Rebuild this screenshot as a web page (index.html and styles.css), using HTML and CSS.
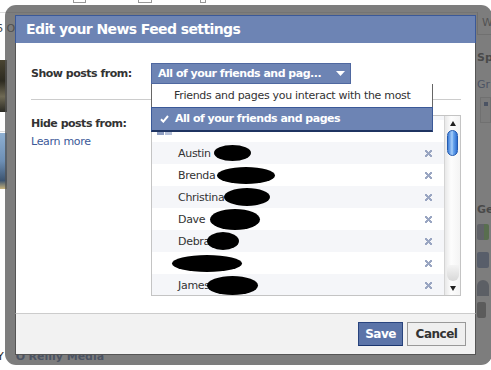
FILE: index.html
```html
<!DOCTYPE html>
<html>
<head>
<meta charset="utf-8">
<link rel="stylesheet" href="styles.css">
</head>
<body>
<div class="page">
  <div class="pmain">
    <div class="ptop"><span class="tb b1"></span><span class="tb b2"></span><span class="tb b3"></span></div>
    <div class="pcontent">
      <div class="pleft">
        <div class="lt">6 O</div>
        <div class="photo dark"></div>
        <div class="hline"></div>
        <div class="photo sky"></div>
      </div>
    </div>
    <div class="pbottom"><span class="yy">Y</span><span class="orm">O'Reilly Media</span></div>
  </div>
  <div class="pside">
    <div class="rbox">W</div>
    <div class="rh">Sp</div>
    <div class="rl">Gr</div>
    <div class="rpanel"><span class="rsq"></span></div>
    <div class="rh rge">Ge</div>
    <div class="ricon green"></div>
    <div class="ricon bubble"></div>
    <div class="ricon people"></div>
    <div class="ricon phone"></div>
  </div>
</div>

<div class="frame">
  <div class="dialog">
    <div class="dlg-title">Edit your News Feed settings</div>
    <div class="dlg-body">
      <div class="field field-show">
        <div class="label">Show posts from:</div>
        <div class="select">
          <div class="select-btn"><span>All of your friends and pag...</span>
            <svg class="tri" width="9" height="5" viewBox="0 0 9 5"><path d="M0 0H9L4.5 5Z" fill="#fff"/></svg>
          </div>
          <ul class="menu">
            <li>Friends and pages you interact with the most</li>
            <li class="sel"><svg class="check" width="9" height="8" viewBox="0 0 9 8"><path d="M1 4.2L3.3 6.6L8 1" fill="none" stroke="#fff" stroke-width="2"/></svg>All of your friends and pages</li>
          </ul>
        </div>
      </div>
      <div class="sep"></div>
      <div class="field field-hide">
        <div class="label">Hide posts from:<a class="learn">Learn more</a></div>
        <div class="listbox">
          <div class="list">
            <div class="rows">
              <div class="row"></div>
              <div class="row"><span class="pgicon"></span></div>
              <div class="row"><span class="name">Austin</span><span class="blob" style="width:37px;height:16px;margin-left:3px"></span><span class="x"></span></div>
              <div class="row"><span class="name">Brenda</span><span class="blob" style="width:58px;height:17px;margin-left:1px"></span><span class="x"></span></div>
              <div class="row"><span class="name">Christina</span><span class="blob" style="width:46px;height:18px;margin-left:0"></span><span class="x"></span></div>
              <div class="row"><span class="name">Dave</span><span class="blob" style="width:50px;height:21px;margin-left:5px"></span><span class="x"></span></div>
              <div class="row"><span class="name">Debra</span><span class="blob" style="width:32px;height:18px;margin-left:-3px"></span><span class="x"></span></div>
              <div class="row"><span class="blob" style="width:70px;height:17px;margin-left:-6px"></span><span class="x"></span></div>
              <div class="row"><span class="name">James</span><span class="blob" style="width:51px;height:19px;margin-left:-3px"></span><span class="x"></span></div>
            </div>
          </div>
          <div class="scrollbar">
            <div class="sb-up"><svg width="6" height="5" viewBox="0 0 6 5"><path d="M3 0L6 5H0Z" fill="#222"/></svg></div>
            <div class="sb-thumb"></div>
            <div class="sb-track"></div>
            <div class="sb-cap"></div>
            <div class="sb-down"><svg width="6" height="5" viewBox="0 0 6 5"><path d="M0 0H6L3 5Z" fill="#222"/></svg></div>
          </div>
        </div>
      </div>
    </div>
    <div class="dlg-footer">
      <button class="btn save">Save</button>
      <button class="btn cancel">Cancel</button>
    </div>
  </div>
</div>
</body>
</html>
```
FILE: styles.css
```css
html, body {
  margin: 0;
  padding: 0;
}
body {
  width: 491px;
  height: 370px;
  overflow: hidden;
  position: relative;
  background: #fff;
  font-family: "DejaVu Sans", sans-serif;
  font-size: 11px;
  color: #333;
}

/* background page */
.page {
  display: flex;
  height: 370px;
}
.pmain {
  flex: 1;
  display: flex;
  flex-direction: column;
}
.ptop {
  height: 12px;
  border-bottom: 1px solid #dcdcdc;
  display: flex;
  align-items: flex-start;
}
.tb {
  display: block;
  height: 2px;
  border: 1px solid #999;
  border-top: none;
}
.b1 { margin-left: 73px; width: 11px; }
.b2 { margin-left: 52px; width: 12px; }
.b3 { margin-left: 48px; width: 4px; }
.pcontent {
  flex: 1;
  display: flex;
}
.pleft {
  width: 8px;
  display: flex;
  flex-direction: column;
}
.lt {
  margin-top: 9px;
  margin-left: -4px;
  white-space: nowrap;
  color: #444;
  font-size: 11px;
}
.photo { width: 7px; }
.dark {
  margin-top: 25px;
  height: 52px;
  background: linear-gradient(#4a4532, #2c2a20 40%, #6f6a55 70%, #2a2a24);
}
.hline {
  margin-top: 19px;
  width: 5px;
  height: 1px;
  background: #ddd;
}
.sky {
  margin-top: 1px;
  height: 56px;
  background: linear-gradient(#8fb0d2, #6d8fb5 50%, #3c5470 85%, #c9b37a);
}
.pbottom {
  height: 20px;
  display: flex;
  align-items: flex-start;
  font-size: 11px;
  white-space: nowrap;
}
.yy { color: #222; margin-left: -3px; }
.orm { color: #3b5998; font-weight: bold; margin-left: 12px; }
.pside {
  width: 14px;
  flex: none;
  display: flex;
  flex-direction: column;
  white-space: nowrap;
  overflow: hidden;
}
.rbox {
  margin-top: 12px;
  height: 22px;
  line-height: 22px;
  border-left: 1px solid #ccc;
  border-bottom: 1px solid #ccc;
  padding-left: 4px;
  color: #555;
}
.rh {
  margin-top: 16px;
  font-weight: bold;
  color: #333;
}
.rl {
  margin-top: 14px;
  color: #3b5998;
}
.rpanel {
  margin-top: 6px;
  margin-left: 3px;
  height: 24px;
  border: 1px solid #ccc;
  background: #f7f7f7;
}
.rsq {
  display: block;
  width: 4px;
  height: 4px;
  margin: 4px 0 0 3px;
  background: #3b5998;
}
.rge { margin-top: 80px; }
.ricon {
  margin-top: 8px;
  width: 12px;
  height: 16px;
  border-radius: 2px;
}
.green { background: linear-gradient(90deg, #8a94a8 60%, #6fc24a 60%); }
.bubble { margin-top: 12px; background: #6d84b4; }
.people { margin-top: 12px; background: #7d879e; border-radius: 6px 6px 0 0; }
.phone { margin-top: 6px; width: 9px; background: #777; }

/* dialog overlay */
.frame {
  position: absolute;
  left: 5px;
  top: 5px;
  width: 487px;
  height: 360px;
  box-sizing: border-box;
  padding: 10px 16px 10px 10px;
  background: rgba(82, 82, 82, 0.75);
  border-radius: 11px;
}
.dialog {
  width: 461px;
  height: 340px;
  display: flex;
  flex-direction: column;
}
.dlg-title {
  height: 28px;
  box-sizing: border-box;
  background: #6d84b4;
  border: 1px solid #3b5998;
  border-bottom: none;
  color: #fff;
  font-size: 14px;
  font-weight: bold;
  letter-spacing: -0.6px;
  line-height: 27px;
  padding: 0 10px;
}
.dlg-body {
  flex: 1;
  background: #fff;
  border-left: 1px solid #555;
  border-right: 1px solid #555;
  padding: 20px 14px 0 15px;
}
.field {
  display: flex;
}
.field-show {
  align-items: center;
  height: 21px;
}
.field-hide {
  align-items: flex-start;
}
.label {
  width: 120px;
  flex: none;
  font-weight: bold;
  letter-spacing: -0.5px;
  line-height: 18px;
  color: #333;
}
.field-hide .label {
  margin-top: 0;
}
.learn {
  display: block;
  font-weight: normal;
  letter-spacing: -0.3px;
  color: #3b5998;
}
.select {
  position: relative;
  width: 200px;
}
.select-btn {
  height: 21px;
  box-sizing: border-box;
  background: #6d84b4;
  border: 1px solid #4f68a0;
  color: #fff;
  font-weight: bold;
  letter-spacing: -0.5px;
  display: flex;
  align-items: center;
  justify-content: space-between;
  padding: 0 5px 0 6px;
}
.tri { display: block; }
.menu {
  position: absolute;
  top: 21px;
  left: 0;
  width: 282px;
  box-sizing: border-box;
  margin: 0;
  padding: 0;
  list-style: none;
  background: #fff;
  border: 1px solid #666;
  border-top: none;
  border-bottom: none;
  z-index: 2;
}
.menu li {
  height: 23px;
  line-height: 23px;
  padding-left: 22px;
  letter-spacing: -0.3px;
  color: #333;
  white-space: nowrap;
}
.menu li.sel {
  height: 22px;
  line-height: 22px;
  background: #6d84b4;
  color: #fff;
  font-weight: bold;
  letter-spacing: -0.5px;
  padding-left: 8px;
  display: flex;
  align-items: center;
  border-top: 1px solid #3b5998;
  border-bottom: 2px solid #1f3461;
  margin: 0 -1px;
  border-left: 1px solid #3b5998;
  border-right: 1px solid #3b5998;
}
.check {
  display: block;
  margin-right: 6px;
  flex: none;
}
.sep {
  height: 1px;
  background: #ccc;
  margin: 15px 0 15px;
}
.listbox {
  width: 310px;
  height: 181px;
  box-sizing: border-box;
  border: 1px solid #c4c4c4;
  display: flex;
  overflow: hidden;
}
.list {
  flex: 1;
  overflow: hidden;
}
.rows {
  margin-top: -18px;
}
.row {
  height: 22px;
  display: flex;
  align-items: center;
  padding: 0 12px 0 26px;
  letter-spacing: -0.3px;
  color: #333;
}
.row:nth-child(odd) {
  background: #f5f6f9;
}
.pgicon {
  display: block;
  width: 15px;
  height: 14px;
  margin-left: -21px;
  margin-top: -7px;
  background: linear-gradient(90deg, #8c9cc0 0 7px, #fff 7px 8px, #b5c0d8 8px);
}
.blob {
  display: inline-block;
  background: #000;
  border-radius: 50%;
}
.x {
  margin-left: auto;
  width: 7px;
  height: 7px;
  background:
    linear-gradient(45deg, transparent 40%, #9aa6c2 40%, #9aa6c2 60%, transparent 60%),
    linear-gradient(-45deg, transparent 40%, #9aa6c2 40%, #9aa6c2 60%, transparent 60%);
}
.scrollbar {
  width: 15px;
  flex: none;
  display: flex;
  flex-direction: column;
  align-items: center;
  background: linear-gradient(90deg, #e8e8e8, #fdfdfd 40%, #f4f4f4);
  border-left: 1px solid #d4d4d4;
}
.sb-up {
  height: 14px;
  display: flex;
  align-items: center;
  justify-content: center;
}
.sb-up svg, .sb-down svg { display: block; }
.sb-thumb {
  width: 11px;
  height: 26px;
  box-sizing: border-box;
  border-radius: 6px;
  border: 1px solid #245bb0;
  background: linear-gradient(90deg, #3f7fd8, #a9d0fb 45%, #6aa6ee 60%, #2e6ed0);
}
.sb-track { flex: 1; }
.sb-cap {
  width: 12px;
  height: 16px;
  border-radius: 0 0 6px 6px;
  background: linear-gradient(#f4f4f4, #d8d8d8);
}
.sb-down {
  height: 14px;
  display: flex;
  align-items: center;
  justify-content: center;
}
.dlg-footer {
  height: 42px;
  box-sizing: border-box;
  background: #f2f2f2;
  border: 1px solid #555;
  border-top: 1px solid #ccc;
  display: flex;
  justify-content: flex-end;
  align-items: center;
  gap: 4px;
  padding: 0 9px 1px 0;
}
.btn {
  height: 24px;
  box-sizing: border-box;
  margin: 0;
  font-family: "DejaVu Sans", sans-serif;
  font-size: 12px;
  font-weight: bold;
  letter-spacing: -0.5px;
  line-height: 20px;
}
.save {
  width: 45px;
  padding: 0;
  background: #5b74a8;
  border: 1px solid #29447e;
  border-bottom-color: #1a356e;
  color: #fff;
}
.cancel {
  width: 59px;
  padding: 0;
  background: #efefef;
  border: 1px solid #999;
  color: #333;
}
```
